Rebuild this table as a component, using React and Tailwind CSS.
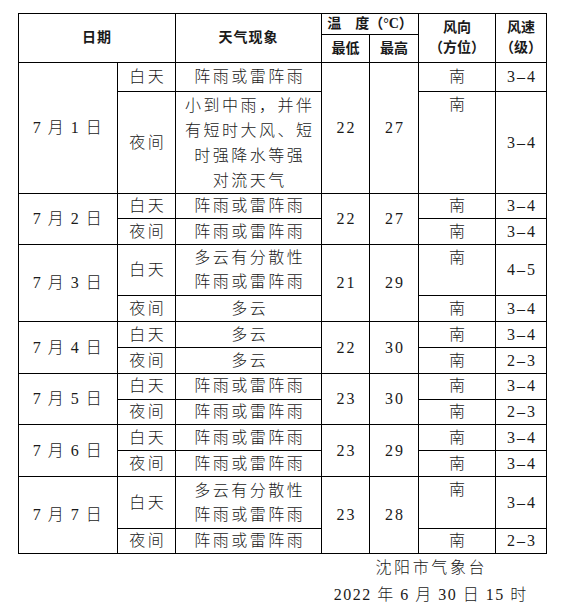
const days = [
  {
    date: "7 月 1 日", lo: "22", hi: "27",
    parts: [
      { t: "白天", w: ["阵雨或雷阵雨"], dir: "南", sp: "3–4", h: "h-[29px]" },
      { t: "夜间", w: ["小到中雨，并伴", "有短时大风、短", "时强降水等强", "对流天气"], dir: "南", sp: "3–4", h: "h-[102px]", top: true },
    ],
  },
  {
    date: "7 月 2 日", lo: "22", hi: "27",
    parts: [
      { t: "白天", w: ["阵雨或雷阵雨"], dir: "南", sp: "3–4", h: "h-[25px]" },
      { t: "夜间", w: ["阵雨或雷阵雨"], dir: "南", sp: "3–4", h: "h-[26px]" },
    ],
  },
  {
    date: "7 月 3 日", lo: "21", hi: "29",
    parts: [
      { t: "白天", w: ["多云有分散性", "阵雨或雷阵雨"], dir: "南", sp: "4–5", h: "h-[51px]", top: true },
      { t: "夜间", w: ["多云"], dir: "南", sp: "3–4", h: "h-[26px]" },
    ],
  },
  {
    date: "7 月 4 日", lo: "22", hi: "30",
    parts: [
      { t: "白天", w: ["多云"], dir: "南", sp: "3–4", h: "h-[26px]" },
      { t: "夜间", w: ["多云"], dir: "南", sp: "2–3", h: "h-[26px]" },
    ],
  },
  {
    date: "7 月 5 日", lo: "23", hi: "30",
    parts: [
      { t: "白天", w: ["阵雨或雷阵雨"], dir: "南", sp: "3–4", h: "h-[25.5px]" },
      { t: "夜间", w: ["阵雨或雷阵雨"], dir: "南", sp: "2–3", h: "h-[25.5px]" },
    ],
  },
  {
    date: "7 月 6 日", lo: "23", hi: "29",
    parts: [
      { t: "白天", w: ["阵雨或雷阵雨"], dir: "南", sp: "3–4", h: "h-[26px]" },
      { t: "夜间", w: ["阵雨或雷阵雨"], dir: "南", sp: "3–4", h: "h-[26px]" },
    ],
  },
  {
    date: "7 月 7 日", lo: "23", hi: "28",
    parts: [
      { t: "白天", w: ["多云有分散性", "阵雨或雷阵雨"], dir: "南", sp: "3–4", h: "h-[52px]", top: true },
      { t: "夜间", w: ["阵雨或雷阵雨"], dir: "南", sp: "2–3", h: "h-[25px]" },
    ],
  },
];

const cell = "border border-black p-0 text-center align-middle";
const cjk = "tracking-[2.5px] pl-[2.5px]";
const num = "tracking-[2px] pl-[2px]";

export default function App() {
  return (
    <div
      className="bg-white min-h-screen w-[563px] h-[605px] pt-[13px] pl-[18px] text-[#1a1a1a] text-[16px] font-light"
      style={{ fontFamily: '"Liberation Serif", "Noto Sans CJK SC", serif' }}
    >
      <table className="border-collapse table-fixed w-[528px]">
        <colgroup>
          <col className="w-[99px]" />
          <col className="w-[58px]" />
          <col className="w-[146px]" />
          <col className="w-[48px]" />
          <col className="w-[49px]" />
          <col className="w-[77px]" />
          <col className="w-[51px]" />
        </colgroup>
        <thead className="text-[14px] font-bold leading-[20px]">
          <tr>
            <th colSpan={2} rowSpan={2} className={cell + " tracking-[1px]"}>日期</th>
            <th rowSpan={2} className={cell + " tracking-[1px]"}>天气现象</th>
            <th colSpan={2} className={cell + " h-[20px]"}>温　度（°C）</th>
            <th rowSpan={2} className={cell}>
              <div>风向</div>
              <div>（方位）</div>
            </th>
            <th rowSpan={2} className={cell}>
              <div>风速</div>
              <div>（级）</div>
            </th>
          </tr>
          <tr>
            <th className={cell + " h-[28px]"}>最低</th>
            <th className={cell}>最高</th>
          </tr>
        </thead>
        <tbody className="leading-[24px]">
          {days.map((d) =>
            d.parts.map((p, i) => (
              <tr key={d.date + p.t}>
                {i === 0 && (
                  <td rowSpan={2} className={cell + " tracking-[1.5px]"}>{d.date}</td>
                )}
                <td className={cell + " " + p.h + " " + cjk}>{p.t}</td>
                <td className={cell + " " + cjk + (p.w.length === 4 ? " leading-[25px]" : "")}>
                  {p.w.map((line) => (
                    <div key={line}>{line}</div>
                  ))}
                </td>
                {i === 0 && (
                  <>
                    <td rowSpan={2} className={cell + " " + num}>{d.lo}</td>
                    <td rowSpan={2} className={cell + " " + num}>{d.hi}</td>
                  </>
                )}
                <td className={cell + " " + cjk + (p.top ? " !align-top pt-[1px]" : "")}>{p.dir}</td>
                <td className={cell + " " + num}>{p.sp}</td>
              </tr>
            ))
          )}
        </tbody>
      </table>
      <div className="w-[230px] ml-[297px] text-center leading-[27px]">
        <div className="tracking-[2.6px] pl-[2.6px]">沈阳市气象台</div>
        <div className="tracking-[1.5px] pl-[1.5px]">2022 年 6 月 30 日 15 时</div>
      </div>
    </div>
  );
}
